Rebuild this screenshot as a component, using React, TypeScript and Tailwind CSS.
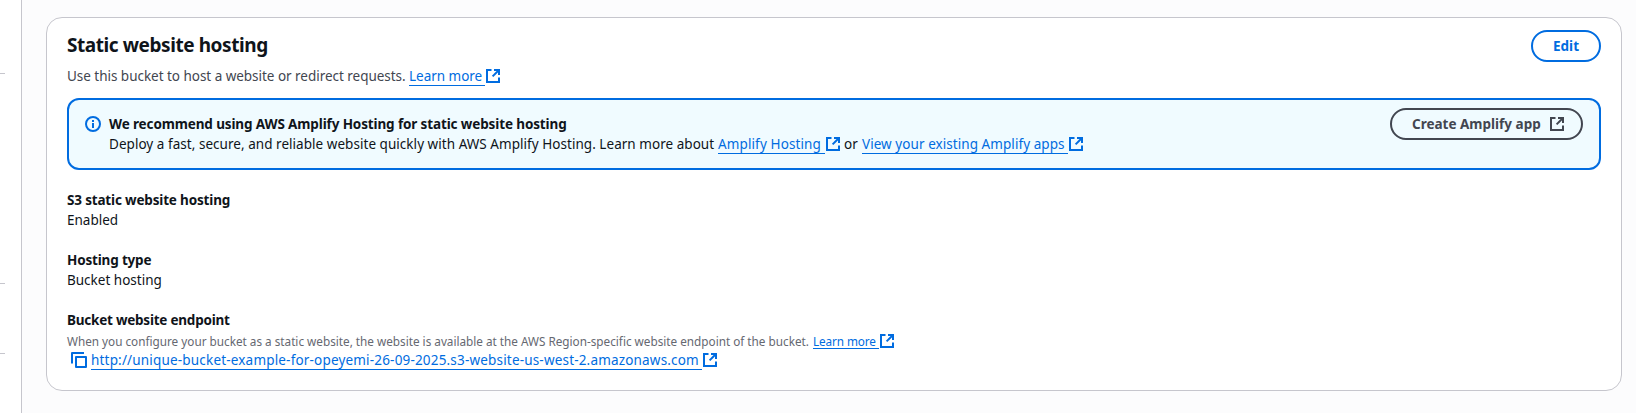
import type { ReactNode } from "react";

function ExternalIcon({ className = "" }: { className?: string }) {
  return (
    <svg viewBox="1 1 14 14" className={`h-[14px] w-[14px] shrink-0 ${className}`} fill="none" stroke="currentColor" strokeWidth="2">
      <path d="M9 2h5v5" />
      <path d="m7.6 8.4 6.4-6.4" />
      <path d="M14 9.4V14H2V2h4.5" />
    </svg>
  );
}

function InfoIcon() {
  return (
    <svg viewBox="0 0 16 16" className="h-4 w-4 shrink-0" fill="none" stroke="#006ce0" strokeWidth="2">
      <circle cx="8" cy="8" r="7" />
      <path d="M8 4v2M8 7v5" />
    </svg>
  );
}

function CopyIcon() {
  return (
    <svg viewBox="0 0 16 16" className="h-4 w-4 shrink-0" fill="none" stroke="#006ce0" strokeWidth="2" strokeLinejoin="round">
      <path d="M1 11.5V1h12" />
      <path d="M5 5h10v10H5z" />
    </svg>
  );
}

function Link({ className, children }: { className: string; children: ReactNode }) {
  return (
    <a href="#" className={`shrink-0 border-b border-[#006ce0] text-[#006ce0] ${className}`}>
      {children}
    </a>
  );
}

function Field({ label, value }: { label: string; value: string }) {
  return (
    <div>
      <div className="font-bold tracking-[-0.17px]">{label}</div>
      <div>{value}</div>
    </div>
  );
}

export default function App() {
  return (
    <div className="flex h-[413px] w-[1636px] overflow-hidden bg-[#fcfcfd] font-['Noto_Sans',sans-serif] text-[13.5px] leading-5 whitespace-nowrap text-[#0f141a]">
      <aside className="flex w-[22px] shrink-0 flex-col border-r border-[#c6c6cd] bg-white pt-[73px]">
        <div className="h-px w-[5px] bg-[#c6c6cd]" />
        <div className="mt-[209px] h-px w-[5px] bg-[#c6c6cd]" />
        <div className="mt-[69px] h-px w-[5px] bg-[#c6c6cd]" />
      </aside>

      <main className="pt-[17px] pl-6">
        <section className="h-[374px] w-[1576px] rounded-2xl border border-[#c6c6cd] bg-white px-5 pt-3">
          <header className="flex h-[68px] items-start justify-between">
            <div>
              <h2 className="pt-[3px] text-[19px] leading-6 font-bold tracking-[-0.43px]">Static website hosting</h2>
              <div className="mt-[9px] flex h-5">
                <span className="w-[342px] tracking-[-0.03px] text-[#424650]">
                  Use this bucket to host a website or redirect requests.
                </span>
                <Link className="h-5 w-[76px] tracking-[-0.02px]">Learn more</Link>
                <ExternalIcon className="mt-[3px] ml-px text-[#006ce0]" />
              </div>
            </div>
            <button className="h-8 w-[70px] rounded-full border-2 border-[#006ce0] font-bold text-[#006ce0]">Edit</button>
          </header>

          <div className="flex h-[72px] items-start rounded-xl border-2 border-[#006ce0] bg-[#f0fbff] pt-2 pr-4 pl-4">
            <div className="pt-2">
              <InfoIcon />
            </div>
            <div className="ml-2 flex-1 pt-[6px]">
              <div className="font-bold tracking-[-0.125px]">
                We recommend using AWS Amplify Hosting for static website hosting
              </div>
              <div className="flex h-5">
                <span className="w-[609px] tracking-[0.04px]">
                  Deploy a fast, secure, and reliable website quickly with AWS Amplify Hosting. Learn more about
                </span>
                <Link className="h-5 w-[107px] tracking-[0.12px]">Amplify Hosting</Link>
                <ExternalIcon className="mt-[3px] ml-px text-[#006ce0]" />
                <span className="w-[22px] pl-1">or</span>
                <Link className="h-5 w-[206px] tracking-[0.06px]">View your existing Amplify apps</Link>
                <ExternalIcon className="mt-[3px] ml-px text-[#006ce0]" />
              </div>
            </div>
            <button className="flex h-8 w-[193px] items-center rounded-full border-2 border-[#424650] pl-5 font-bold text-[#424650]">
              <span className="w-[138px] text-left">Create Amplify app</span>
              <ExternalIcon />
            </button>
          </div>

          <div className="mt-5 flex flex-col gap-5">
            <Field label="S3 static website hosting" value="Enabled" />
            <Field label="Hosting type" value="Bucket hosting" />
            <div>
              <div className="font-bold tracking-[-0.23px]">Bucket website endpoint</div>
              <div className="mt-[2px] flex h-4 text-[11.75px] leading-4">
                <span className="w-[746px] pt-px tracking-[-0.007px] text-[#656871]">
                  When you configure your bucket as a static website, the website is available at the AWS Region-specific website
                  endpoint of the bucket.
                </span>
                <Link className="h-[17px] w-[66px] pt-px tracking-[-0.1px]">Learn more</Link>
                <ExternalIcon className="mt-[2px] ml-px text-[#006ce0]" />
              </div>
              <div className="mt-[2px] flex h-5 pl-1">
                <div className="mt-[2px] w-5">
                  <CopyIcon />
                </div>
                <Link className="h-5 w-[611px] tracking-[0.18px]">
                  http://unique-bucket-example-for-opeyemi-26-09-2025.s3-website-us-west-2.amazonaws.com
                </Link>
                <ExternalIcon className="mt-[3px] ml-px text-[#006ce0]" />
              </div>
            </div>
          </div>
        </section>
      </main>
    </div>
  );
}
